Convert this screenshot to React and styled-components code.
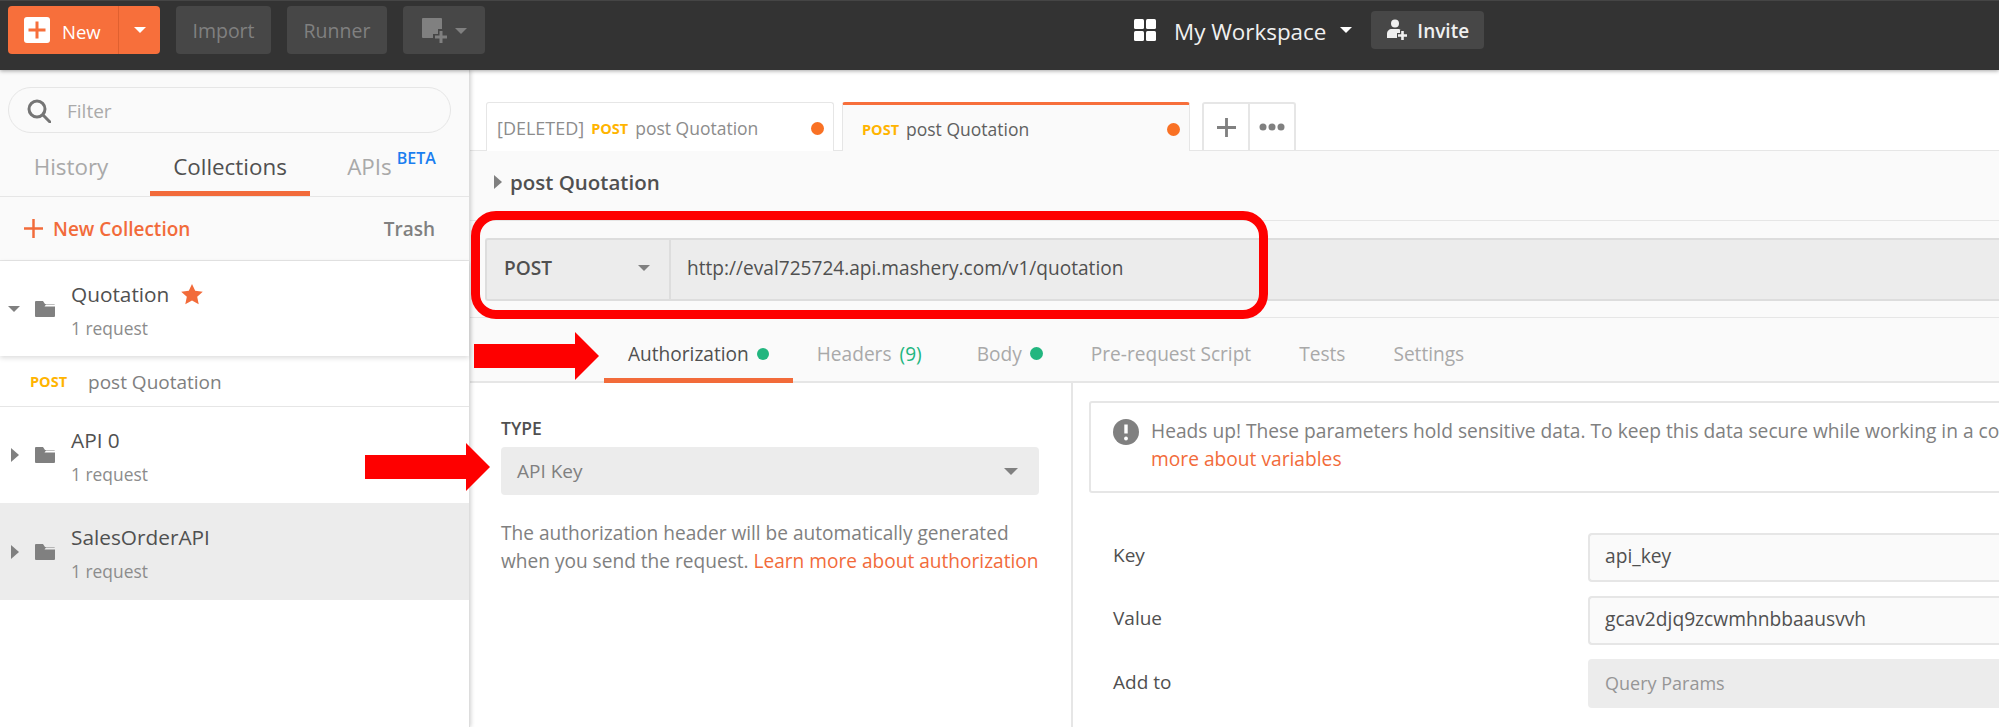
import React from 'react'
import styled, { createGlobalStyle, css } from 'styled-components'

const Global = createGlobalStyle`
  html, body { margin: 0; padding: 0; height: 100%; background: #fff; overflow: hidden; }
  body { font-family: 'Open Sans', 'Noto Sans', sans-serif; }
  * { box-sizing: border-box; }
`

const orange = '#f26b3a'

const Page = styled.div`
  position: relative;
  width: 1999px;
  height: 727px;
  overflow: hidden;
  display: flex;
  flex-direction: column;
`

// top bar
const Header = styled.header`
  height: 70px;
  flex: none;
  background: #333;
  border-top: 1px solid #454545;
  display: flex;
  align-items: flex-start;
  padding: 5px 0 0 8px;
  box-shadow: 0 1px 4px rgba(0,0,0,.35);
  position: relative;
  z-index: 3;
`
const NewButton = styled.div`
  width: 152px;
  height: 48px;
  border-radius: 4px;
  background: #f76f3b;
  color: #fff;
  font-size: 18.5px;
  display: flex;
  align-items: center;
`
const NewLabel = styled.div`
  width: 111px;
  height: 100%;
  padding-left: 16px;
  display: flex;
  align-items: center;
  gap: 12px;
  border-right: 1px solid #e0602f;
`
const LabelText = styled.span`
  padding-top: 2px;
`
const NewCaret = styled.div`
  flex: 1;
  display: flex;
  justify-content: center;
`
const DarkButton = styled.div`
  height: 48px;
  width: ${p => p.$w}px;
  margin-left: 16px;
  border-radius: 4px;
  background: #474747;
  color: #808080;
  font-size: 19.5px;
  display: flex;
  align-items: center;
  justify-content: center;
  gap: 7px;
  padding-top: 1px;
`
const WorkspaceGroup = styled.div`
  margin-left: 649px;
  height: 48px;
  display: flex;
  align-items: center;
  color: #f0f0f0;
  font-size: 22.4px;
`
const WorkspaceName = styled.span`
  margin: 2px 14px 0 18px;
`
const InviteButton = styled.div`
  margin-left: 19px;
  width: 113px;
  height: 38px;
  border-radius: 4px;
  background: #474747;
  display: flex;
  align-items: center;
  padding-left: 16px;
  gap: 10px;
  font-size: 19px;
  font-weight: 600;
  color: #f0f0f0;
`

const Caret = styled.span`
  display: inline-block;
  flex: none;
  width: 0;
  height: 0;
  ${p => p.$dir === 'right' ? css`
    border-top: ${p.$size || 7}px solid transparent;
    border-bottom: ${p.$size || 7}px solid transparent;
    border-left: ${(p.$size || 7) * 1.15}px solid ${p.$color || '#808080'};
  ` : css`
    border-left: ${p.$size || 7}px solid transparent;
    border-right: ${p.$size || 7}px solid transparent;
    border-top: ${(p.$size || 7) * 1.1}px solid ${p.$color || '#808080'};
  `}
`

// sidebar
const Body = styled.div`
  flex: 1;
  display: flex;
  min-height: 0;
`
const Sidebar = styled.aside`
  width: 470px;
  flex: none;
  background: #fff;
  border-right: 1px solid #ddd;
  box-shadow: 1px 0 4px rgba(0,0,0,.18);
  position: relative;
  z-index: 2;
`
const SideTop = styled.div`
  background: #fafafa;
  padding-top: 17px;
`
const FilterBox = styled.div`
  margin: 0 18px 0 8px;
  height: 46px;
  border: 1px solid #e6e6e6;
  border-radius: 23px;
  display: flex;
  align-items: center;
  padding: 1px 0 0 18px;
  gap: 16px;
  color: #aaa;
  font-size: 19px;
`
const SideTabs = styled.div`
  display: grid;
  grid-template-columns: 150px 160px 159px;
  height: 64px;
  border-bottom: 1px solid #e6e6e6;
`
const SideTab = styled.div`
  display: flex;
  justify-content: center;
  align-items: flex-start;
  padding: 18px ${p => p.$right || 0}px 0 ${p => p.$left || 0}px;
  font-size: 22.4px;
  color: ${p => p.$active ? '#505050' : '#a9a9a9'};
  border-bottom: ${p => p.$active ? `5px solid ${orange}` : 'none'};
`
const Beta = styled.sup`
  font-size: 16px;
  font-weight: 600;
  color: #1a7ef0;
  line-height: 1;
  margin: -1px 0 0 5px;
`
const NewRow = styled.div`
  height: 64px;
  display: flex;
  align-items: center;
  justify-content: space-between;
  padding: 0 34px 0 24px;
  background: #fafafa;
  border-bottom: 1px solid #e6e6e6;
  font-size: 19px;
  font-weight: 600;
`
const NewCollection = styled.div`
  display: flex;
  align-items: center;
  gap: 10px;
  color: ${orange};
`
const Trash = styled.div`
  color: #808080;
`
const Collection = styled.div`
  height: ${p => p.$h}px;
  background: ${p => p.$selected ? '#ececec' : '#fff'};
  display: flex;
  align-items: center;
  position: relative;
  padding-left: ${p => p.$open ? 8 : 11}px;
  ${p => p.$open && 'box-shadow: 0 2px 5px rgba(0,0,0,.14); z-index: 1;'}
`
const CaretSlot = styled.div`
  width: ${p => p.$open ? 27 : 24}px;
  display: flex;
`
const CollectionText = styled.div`
  margin: 2px 0 0 16px;
`
const CollectionName = styled.div`
  display: flex;
  align-items: center;
  gap: 12px;
  font-size: 20.8px;
  line-height: 27px;
  color: #505050;
`
const CollectionCount = styled.div`
  margin-top: 9px;
  font-size: 17.4px;
  line-height: 22px;
  color: #8c8c8c;
`
const RequestRow = styled.div`
  height: 51px;
  display: flex;
  align-items: center;
  padding: 1px 0 0 30px;
  gap: 21px;
  border-bottom: 1px solid #e6e6e6;
  font-size: 19px;
  color: #808080;
`
const Method = styled.span`
  color: #ffb400;
  font-weight: 700;
  font-size: 14.5px;
`

// main area
const Main = styled.main`
  flex: 1;
  min-width: 0;
  display: flex;
  flex-direction: column;
`
const TabBar = styled.div`
  height: 81px;
  flex: none;
  padding: 32px 0 0 16px;
  display: flex;
  border-bottom: 1px solid #e6e6e6;
`
const ReqTab = styled.div`
  width: 348px;
  height: 49px;
  margin-right: 8px;
  display: flex;
  align-items: center;
  padding: 2px 9px 0 ${p => p.$active ? 19 : 10}px;
  font-size: 17.5px;
  color: ${p => p.$active ? '#606060' : '#8c8c8c'};
  background: ${p => p.$active ? '#fafafa' : '#fff'};
  border: 1px solid #e6e6e6;
  border-bottom: none;
  border-radius: 3px 3px 0 0;
  ${p => p.$active && `border-top: 3px solid #f76f3b; margin-bottom: -1px; height: 49px;`}
`
const Deleted = styled.span`
  font-size: 18px;
  margin-right: 7px;
`
const TabName = styled.span`
  margin-left: 7px;
  flex: 1;
`
const Dot = styled.span`
  width: ${p => p.$size || 13}px;
  height: ${p => p.$size || 13}px;
  flex: none;
  border-radius: 50%;
  background: ${p => p.$color || '#f97124'};
`
const TabTools = styled.div`
  margin-left: 4px;
  width: 94px;
  height: 48px;
  display: flex;
  border: 2px solid #e6e6e6;
  border-bottom: none;
  border-radius: 3px 3px 0 0;
`
const ToolCell = styled.div`
  flex: 1;
  display: flex;
  align-items: center;
  justify-content: center;
  & + & { border-left: 2px solid #e6e6e6; }
`
const Workarea = styled.div`
  flex: none;
  background: #fafafa;
`
const Breadcrumb = styled.div`
  height: 70px;
  display: flex;
  align-items: center;
  gap: 8px;
  padding: 0 0 8px 24px;
  font-size: 20.5px;
  font-weight: 600;
  color: #505050;
  border-bottom: 1px solid #e6e6e6;
`
const UrlRow = styled.div`
  height: 97px;
  padding: 17px 0 0 15px;
  border-bottom: 1px solid #e6e6e6;
`
const UrlBar = styled.div`
  height: 63px;
  background: #ececec;
  border: 2px solid #ddd;
  border-right: none;
  border-radius: 3px 0 0 3px;
  display: flex;
  align-items: center;
  font-size: 19.1px;
  color: #505050;
`
const MethodSelect = styled.div`
  width: 184px;
  height: 100%;
  padding: 0 19px 4px 17px;
  display: flex;
  align-items: center;
  justify-content: space-between;
  font-weight: 600;
  border-right: 2px solid #ddd;
`
const UrlText = styled.div`
  padding: 0 0 4px 16px;
`
const ReqTabs = styled.div`
  height: 65px;
  display: flex;
  padding-left: 134px;
  border-bottom: 2px solid #e6e6e6;
`
const ReqTabItem = styled.div`
  padding: ${p => p.$active ? 11 : 6}px 24px 0;
  margin-bottom: -2px;
  display: flex;
  align-items: center;
  gap: 8px;
  font-size: 19.1px;
  color: ${p => p.$active ? '#505050' : '#a9a9a9'};
  border-bottom: ${p => p.$active ? `5px solid ${orange}` : 'none'};
`
const Green = styled.span`
  color: #22b67f;
  margin-right: 7px;
`
const AuthPanel = styled.div`
  flex: 1;
  display: flex;
  min-height: 0;
  background: #fff;
`
const AuthLeft = styled.div`
  width: 603px;
  flex: none;
  padding: 34px 32px 0 31px;
  border-right: 2px solid #e6e6e6;
`
const TypeLabel = styled.div`
  font-size: 17.5px;
  font-weight: 600;
  line-height: 22px;
  color: #505050;
`
const TypeSelect = styled.div`
  margin-top: 8px;
  height: 48px;
  background: #ececec;
  border-radius: 4px;
  padding: 0 21px 0 16px;
  display: flex;
  align-items: center;
  justify-content: space-between;
  font-size: 19px;
  color: #808080;
`
const Help = styled.p`
  margin: 24px 0 0;
  width: 545px;
  font-size: 19.1px;
  line-height: 28px;
  color: #808080;
`
const Link = styled.span`
  color: ${orange};
`
const AuthRight = styled.div`
  flex: 1;
  min-width: 0;
  padding: 18px 0 0 16px;
`
const Notice = styled.div`
  height: 92px;
  width: 1100px;
  border: 2px solid #e6e6e6;
  border-radius: 3px;
  padding: 14px 0 0 22px;
  display: flex;
  gap: 12px;
  font-size: 19.2px;
  line-height: 28px;
  color: #808080;
`
const NoticeText = styled.div`
  white-space: nowrap;
`
const Fields = styled.div`
  margin: 40px 0 0 24px;
  display: grid;
  grid-template-columns: 475px 500px;
  row-gap: 14px;
`
const FieldLabel = styled.div`
  font-size: 19px;
  color: #505050;
  display: flex;
  align-items: center;
  height: 49px;
  padding-bottom: ${p => p.$low ? 4 : 6}px;
`
const FieldInput = styled.div`
  height: 49px;
  display: flex;
  align-items: center;
  padding: 0 0 ${p => p.$disabled ? 2 : 4}px 15px;
  font-size: ${p => p.$disabled ? 18 : 19.2}px;
  border-radius: 4px 0 0 4px;
  color: ${p => p.$disabled ? '#969696' : '#505050'};
  background: ${p => p.$disabled ? '#ececec' : '#fafafa'};
  border: 2px solid ${p => p.$disabled ? '#ececec' : '#e6e6e6'};
  border-right: none;
`

// red markup drawn over the screenshot
const RedBox = styled.div`
  position: absolute;
  left: 471px;
  top: 211px;
  width: 797px;
  height: 108px;
  border: 9px solid #fe0000;
  border-radius: 25px;
  z-index: 5;
`
const RedArrow = styled.svg`
  position: absolute;
  left: ${p => p.$x}px;
  top: ${p => p.$y}px;
  z-index: 5;
`
const AlertSvg = styled.svg`
  flex: none;
  margin-top: 2px;
`

const PlusSquare = () => (
  <svg width="26" height="26" viewBox="0 0 26 26">
    <rect width="26" height="26" rx="3" fill="#fff" />
    <path d="M13 4.5v17M4.5 13h17" stroke="#f76f3b" strokeWidth="3" />
  </svg>
)
const NewWindowIcon = () => (
  <svg width="26" height="26" viewBox="0 0 26 26">
    <path d="M1 0h18a1 1 0 0 1 1 1v10h-4v5h-5v4H1a1 1 0 0 1-1-1V1a1 1 0 0 1 1-1z" fill="#808080" />
    <path d="M19 13v12M13 19h12" stroke="#808080" strokeWidth="3" />
  </svg>
)
const Search = () => (
  <svg width="24" height="24" viewBox="0 0 24 24" fill="none" stroke="#757575" strokeWidth="3">
    <circle cx="10" cy="10" r="8" />
    <path d="M16 16l7 7" strokeLinecap="round" />
  </svg>
)
const GridIcon = () => (
  <svg width="22" height="22" viewBox="0 0 22 22" fill="#fff">
    <rect width="10" height="10" rx="1.5" />
    <rect x="12" width="10" height="10" rx="1.5" />
    <rect y="12" width="10" height="10" rx="1.5" />
    <rect x="12" y="12" width="10" height="10" rx="1.5" />
  </svg>
)
const InviteIcon = () => (
  <svg width="20" height="22" viewBox="0 0 20 22" fill="#f0f0f0">
    <circle cx="8" cy="4.5" r="4" />
    <path d="M0 19v-4c0-3 2-5 5-5h6c1 0 2 .3 2.6 1H13v3h-3v5z" />
    <path d="M15.5 12v9M11 16.5h9" stroke="#f0f0f0" strokeWidth="2.6" />
  </svg>
)
const PlusIcon = ({ size, color, width }) => (
  <svg width={size} height={size} viewBox="0 0 20 20">
    <path d="M10 0v20M0 10h20" stroke={color} strokeWidth={width} strokeLinecap="round" />
  </svg>
)
const Folder = () => (
  <svg width="20" height="16" viewBox="0 0 20 16" fill="#808080">
    <path d="M0 1a1 1 0 0 1 1-1h7l2 3h9a1 1 0 0 1 1 1v-.5H11L9.500 5.500H20V15a1 1 0 0 1-1 1H1a1 1 0 0 1-1-1z" />
  </svg>
)
const Star = () => (
  <svg width="22" height="21" viewBox="0 0 20 19" fill="#f26b3a">
    <path d="M10 0l2.900 6.200 6.900.8-5.100 4.600 1.400 6.800L10 15l-6.100 3.400 1.400-6.800L.2 7l6.900-.8z" />
  </svg>
)
const Alert = () => (
  <AlertSvg width="26" height="26" viewBox="0 0 26 26">
    <circle cx="13" cy="13" r="13" fill="#808080" />
    <path d="M13 5.500v9" stroke="#fff" strokeWidth="3.400" />
    <circle cx="13" cy="19.500" r="1.900" fill="#fff" />
  </AlertSvg>
)
const Dots = () => (
  <svg width="26" height="8" viewBox="0 0 26 8" fill="#808080">
    <circle cx="4" cy="4" r="3.500" />
    <circle cx="13" cy="4" r="3.500" />
    <circle cx="22" cy="4" r="3.500" />
  </svg>
)
const Arrow = ({ x, y }) => (
  <RedArrow $x={x} $y={y} width="125" height="48" viewBox="0 0 125 48">
    <path d="M0 12h101V0l24 24-24 24V36H0z" fill="#fe0000" />
  </RedArrow>
)

const CollectionItem = ({ name, h, open, selected, star }) => (
  <Collection $h={h} $open={open} $selected={selected}>
    <CaretSlot $open={open}>
      {open ? <Caret $size={6} /> : <Caret $dir="right" $size={7} />}
    </CaretSlot>
    <Folder />
    <CollectionText>
      <CollectionName>{name}{star && <Star />}</CollectionName>
      <CollectionCount>1 request</CollectionCount>
    </CollectionText>
  </Collection>
)

export default function App() {
  return (
    <Page>
      <Global />
      <Header>
        <NewButton>
          <NewLabel><PlusSquare /><LabelText>New</LabelText></NewLabel>
          <NewCaret><Caret $color="#fff" $size={6} /></NewCaret>
        </NewButton>
        <DarkButton $w={95}>Import</DarkButton>
        <DarkButton $w={100}>Runner</DarkButton>
        <DarkButton $w={82}><NewWindowIcon /><Caret $size={6} /></DarkButton>
        <WorkspaceGroup>
          <GridIcon />
          <WorkspaceName>My Workspace</WorkspaceName>
          <Caret $color="#fff" $size={6} />
          <InviteButton><InviteIcon /><LabelText>Invite</LabelText></InviteButton>
        </WorkspaceGroup>
      </Header>
      <Body>
        <Sidebar>
          <SideTop>
            <FilterBox><Search />Filter</FilterBox>
            <SideTabs>
              <SideTab $right={8}>History</SideTab>
              <SideTab $active>Collections</SideTab>
              <SideTab $left={4}>APIs<Beta>BETA</Beta></SideTab>
            </SideTabs>
            <NewRow>
              <NewCollection><PlusIcon size={19} color={orange} width={2.6} />New Collection</NewCollection>
              <Trash>Trash</Trash>
            </NewRow>
          </SideTop>
          <CollectionItem name="Quotation" h={95} open star />
          <RequestRow><Method>POST</Method>post Quotation</RequestRow>
          <CollectionItem name="API 0" h={96} />
          <CollectionItem name="SalesOrderAPI" h={97} selected />
        </Sidebar>
        <Main>
          <TabBar>
            <ReqTab>
              <Deleted>[DELETED]</Deleted>
              <Method>POST</Method>
              <TabName>post Quotation</TabName>
              <Dot />
            </ReqTab>
            <ReqTab $active>
              <Method>POST</Method>
              <TabName>post Quotation</TabName>
              <Dot />
            </ReqTab>
            <TabTools>
              <ToolCell><PlusIcon size={19} color="#808080" width={3} /></ToolCell>
              <ToolCell><Dots /></ToolCell>
            </TabTools>
          </TabBar>
          <Workarea>
            <Breadcrumb><Caret $dir="right" $size={7} />post Quotation</Breadcrumb>
            <UrlRow>
              <UrlBar>
                <MethodSelect>POST<Caret $size={6} /></MethodSelect>
                <UrlText>http://eval725724.api.mashery.com/v1/quotation</UrlText>
              </UrlBar>
            </UrlRow>
            <ReqTabs>
              <ReqTabItem $active>Authorization<Dot $color="#22b67f" $size={12} /></ReqTabItem>
              <ReqTabItem>Headers<Green>(9)</Green></ReqTabItem>
              <ReqTabItem>Body<Dot $color="#22b67f" $size={13} /></ReqTabItem>
              <ReqTabItem>Pre-request Script</ReqTabItem>
              <ReqTabItem>Tests</ReqTabItem>
              <ReqTabItem>Settings</ReqTabItem>
            </ReqTabs>
          </Workarea>
          <AuthPanel>
            <AuthLeft>
              <TypeLabel>TYPE</TypeLabel>
              <TypeSelect>API Key<Caret $size={7} /></TypeSelect>
              <Help>
                The authorization header will be automatically generated when you send the request. <Link>Learn more about authorization</Link>
              </Help>
            </AuthLeft>
            <AuthRight>
              <Notice>
                <Alert />
                <NoticeText>
                  Heads up! These parameters hold sensitive data. To keep this data secure while working in a collaborative environment, we recommend using variables. Learn<br />
                  <Link>more about variables</Link>
                </NoticeText>
              </Notice>
              <Fields>
                <FieldLabel>Key</FieldLabel>
                <FieldInput>api_key</FieldInput>
                <FieldLabel>Value</FieldLabel>
                <FieldInput>gcav2djq9zcwmhnbbaausvvh</FieldInput>
                <FieldLabel $low>Add to</FieldLabel>
                <FieldInput $disabled>Query Params</FieldInput>
              </Fields>
            </AuthRight>
          </AuthPanel>
        </Main>
      </Body>
      <RedBox />
      <Arrow x={474} y={332} />
      <Arrow x={365} y={443} />
    </Page>
  )
}
